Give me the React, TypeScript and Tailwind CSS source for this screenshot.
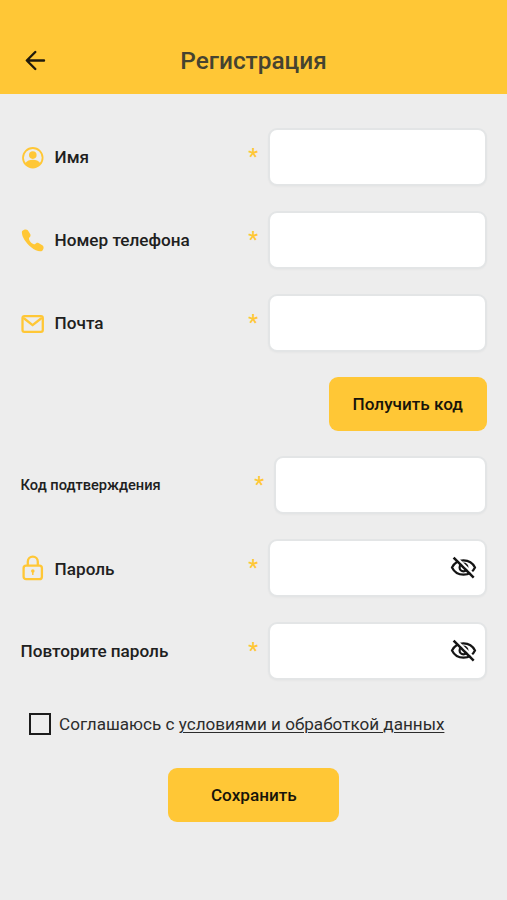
import React, { useState } from 'react';

function PersonIcon() {
  return (
    <svg width="23" height="23" viewBox="0 0 23 23" fill="none">
      <circle cx="11.8" cy="11.8" r="9.8" stroke="#ffc736" strokeWidth="1.8" />
      <circle cx="11.8" cy="9.100" r="3.8" fill="#ffc736" />
      <path d="M4 17.400C6 14.800 8.600 13.800 11.800 13.800s5.800 1 7.800 3.600C17.800 20.300 15 21.800 11.800 21.800s-6-1.500-7.800-4.400Z" fill="#ffc736" />
    </svg>
  );
}

function PhoneIcon() {
  return (
    <svg width="23" height="23" viewBox="0 0 23 23" fill="#ffc736">
      <path d="M1 2.200C2.600.300 5.400-.200 6.800 1.200L9.300 5.300C9.900 6.700 9.300 7.900 8 9.100C7.700 11.600 11.300 15.300 13.900 15.300C15 14 16.200 13.400 17.500 14L21.700 16.500C23.200 17.800 22.700 20.300 21 22C18.500 23.100 14.300 21.700 9.900 18C4.600 13.500.100 7 1 2.200Z" />
    </svg>
  );
}

function MailIcon() {
  return (
    <svg width="23" height="18" viewBox="0 0 23 18" className="relative top-px" fill="none" stroke="#ffc736" strokeWidth="2.300" strokeLinejoin="round" strokeLinecap="round">
      <rect x="1.500" y="1.150" width="20.300" height="15.700" rx="1.800" />
      <path d="m3.200 3.500 8.400 6.700 8.400-6.700" />
    </svg>
  );
}

function LockIcon() {
  return (
    <svg width="23" height="26" viewBox="0 0 23 26" fill="none" stroke="#ffc736" strokeWidth="2.300">
      <path d="M6.800 10.700V6.700a5 5 0 0 1 10 0v4" />
      <rect x="2.600" y="10.700" width="18.300" height="13.500" rx="2.500" />
      <circle cx="11.800" cy="16" r="1.800" fill="#ffc736" stroke="none" />
      <path d="M11.800 16v4" strokeWidth="1.500" />
    </svg>
  );
}

function EyeOffIcon() {
  return (
    <svg width="27" height="25" viewBox="0 0 27 25" fill="none" stroke="currentColor" strokeWidth="2.200">
      <path d="M2 12.500C4.200 8 8.500 5.300 13.500 5.300S22.800 8 25 12.500C22.800 17 18.500 19.700 13.500 19.700S4.200 17 2 12.500Z" />
      <circle cx="13.500" cy="12.500" r="3.900" />
      <path d="M5.500 1.600 26 21.600" stroke="#fff" strokeWidth="2.200" />
      <path d="M3.600 2.700 23.700 22.700" strokeWidth="2.500" />
    </svg>
  );
}

interface FieldProps {
  label: string;
  icon?: React.ReactNode;
  labelClass?: string;
  inputClass?: string;
  type?: string;
}

function Field({ label, icon, labelClass = 'text-[17.15px]', inputClass = 'w-[219px]', type = 'text' }: FieldProps) {
  const [hidden, setHidden] = useState(true);
  const secret = type === 'password';
  return (
    <label className="flex h-[58px] items-center">
      {icon && <span className="flex w-[34px] shrink-0 items-center">{icon}</span>}
      <span className={`font-medium leading-6 whitespace-nowrap text-[#202020] ${labelClass}`}>{label}</span>
      <span className="mr-[10px] mb-px ml-auto text-[22px] font-medium leading-6 text-[#ffc736]">*</span>
      <span className={`flex h-[58px] items-center rounded-[9px] border-2 border-[#e3e5e6] bg-white shadow-[0_1px_2px_rgba(0,0,0,0.03)] ${inputClass}`}>
        <input type={secret && hidden ? 'password' : 'text'} className="h-full min-w-0 flex-1 bg-transparent px-3 outline-none" />
        {secret && (
          <button type="button" className="mr-[8px] -mt-[2px] text-[#151515]" onClick={() => setHidden(!hidden)}>
            <EyeOffIcon />
          </button>
        )}
      </span>
    </label>
  );
}

export default function App() {
  return (
    <div className="flex h-[900px] w-[507px] flex-col bg-[#ededed] font-['Roboto','Noto_Sans',sans-serif]">
      <header className="grid h-[94px] grid-cols-[60px_1fr_60px] items-center bg-[#ffc736] pt-[27px]">
        <button className="ml-[21px] w-fit text-[#201a0c]">
          <svg width="28" height="28" viewBox="0 0 28 28" fill="none" stroke="currentColor" strokeWidth="2.400" strokeLinecap="round" strokeLinejoin="round">
            <path d="M23 13.500H6M14.300 5 5.800 13.500l8.500 8.500" />
          </svg>
        </button>
        <h1 className="text-center text-[24.4px] font-medium leading-8 text-[#464330]">Регистрация</h1>
      </header>
      <form className="flex flex-col pt-[34px] pr-[20px] pl-[20.6px]">
        <div className="flex flex-col gap-[25px]">
          <Field label="Имя" icon={<PersonIcon />} />
          <Field label="Номер телефона" icon={<PhoneIcon />} />
          <Field label="Почта" icon={<MailIcon />} />
        </div>
        <button type="button" className="mt-[25px] h-[54px] w-[158.500px] self-end rounded-[9px] bg-[#ffc736] pt-[2px] text-[17.15px] font-medium text-[#17140a]">Получить код</button>
        <div className="mt-[25px] flex flex-col gap-[25px]">
          <Field label="Код подтверждения" labelClass="text-[14.65px]" inputClass="w-[213px]" />
          <Field label="Пароль" icon={<LockIcon />} labelClass="mt-[2px] text-[17.15px]" type="password" />
          <Field label="Повторите пароль" type="password" />
        </div>
        <label className="mt-[32px] ml-[8px] flex h-6 items-center">
          <input type="checkbox" className="size-[22px] appearance-none border-[2.5px] border-[#1c1c1c]" />
          <span className="ml-[8.500px] text-[17.1px] leading-6 whitespace-nowrap text-[#2c2c2c]">
            Соглашаюсь с <a className="underline decoration-1 underline-offset-2">условиями и обработкой данных</a>
          </span>
        </label>
        <button type="button" className="mt-[32px] h-[54px] w-[171px] self-center rounded-[9px] bg-[#ffc736] pt-[2px] text-[17.15px] font-medium text-[#17140a]">Сохранить</button>
      </form>
    </div>
  );
}
